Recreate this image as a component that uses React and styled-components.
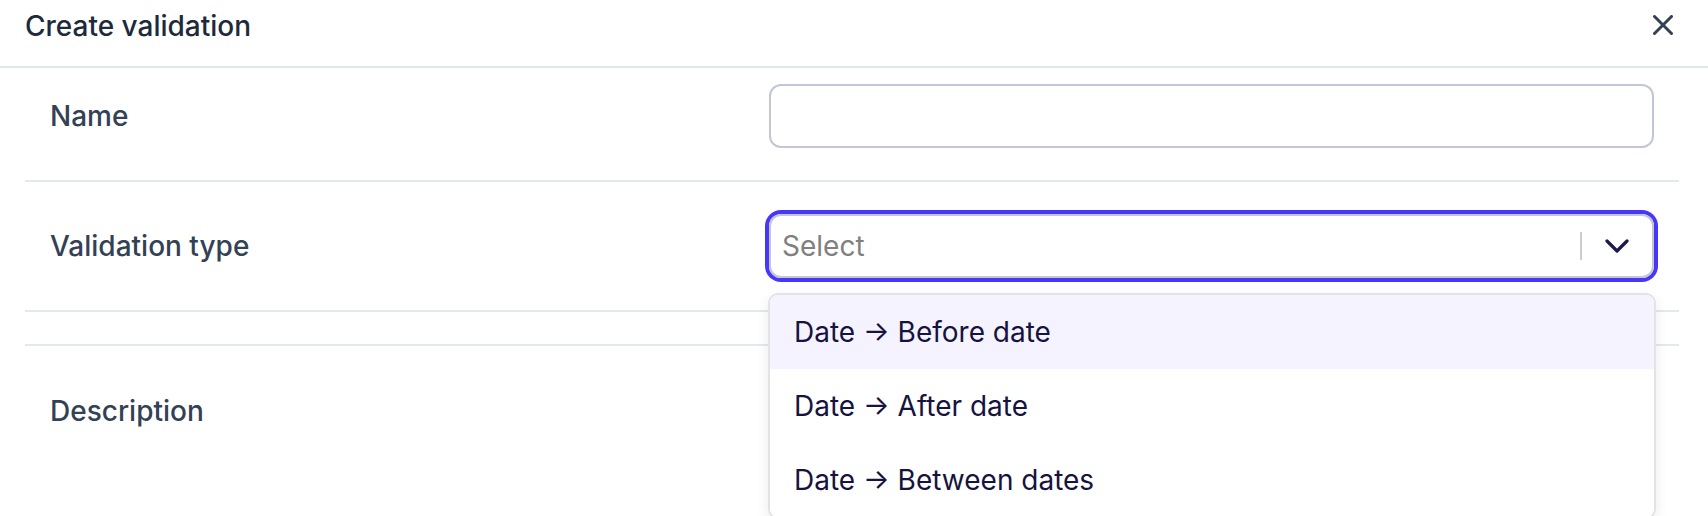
import React from "react";
import styled, { createGlobalStyle } from "styled-components";

const GlobalStyle = createGlobalStyle`
  * { box-sizing: border-box; }
  body {
    margin: 0;
    background: #fff;
    font-family: Inter, "Noto Sans", "Liberation Sans", sans-serif;
  }
`;

const options = ["Date → Before date", "Date → After date", "Date → Between dates"];

const Modal = styled.div`
  width: 1708px;
  height: 516px;
  overflow: hidden;
  background: #fff;
`;

const Header = styled.div`
  height: 68px;
  padding: 9px 35px 0 25px;
  display: flex;
  justify-content: space-between;
  align-items: flex-start;
  border-bottom: 2px solid #e2e8f0;
`;

const Title = styled.h2`
  margin: 0;
  font-size: 28px;
  line-height: 34px;
  font-weight: 500;
  color: #1e293b;
`;

const CloseButton = styled.button`
  margin-top: 6px;
  padding: 0;
  border: 0;
  background: none;
  width: 20px;
  height: 20px;
  display: flex;
  color: #334155;
  cursor: pointer;
`;

const Body = styled.div`
  padding: 0 29px 0 25px;
`;

const Row = styled.div`
  display: grid;
  grid-template-columns: 719px 1fr;
  align-items: center;
  padding: ${(p) => p.$pad || "32px 25px"};
  min-height: ${(p) => p.$minHeight || "auto"};
  border-bottom: 2px solid #e2e8f0;
`;

const Label = styled.label`
  font-size: 28px;
  line-height: 34px;
  font-weight: 500;
  color: #334155;
`;

const TextInput = styled.input`
  height: 64px;
  width: 100%;
  border: 2px solid #c3c7d3;
  border-radius: 12px;
  font: inherit;
  font-size: 28px;
  padding: 0 11px;
  outline: none;
`;

const TextArea = styled.textarea`
  height: 98px;
  width: 100%;
  border: 2px solid #c3c7d3;
  border-radius: 12px;
  font: inherit;
  font-size: 28px;
  padding: 12px 11px;
  resize: none;
  outline: none;
  display: block;
`;

const SelectControl = styled.div`
  position: relative;
  height: 64px;
  display: flex;
  align-items: center;
  border: 2px solid #c3c7d3;
  border-radius: 12px;
  box-shadow: 0 0 0 4px #4836fb;
`;

const Placeholder = styled.div`
  flex: 1;
  padding-left: 11px;
  font-size: 28px;
  line-height: 34px;
  color: #808080;
`;

const Separator = styled.span`
  width: 2px;
  height: 28px;
  background: #cccccc;
`;

const Indicator = styled.div`
  width: 70px;
  display: flex;
  justify-content: center;
  align-items: center;
  color: #1e1a4d;
`;

const Menu = styled.ul`
  position: absolute;
  top: calc(100% + 17px);
  left: -3px;
  right: -4px;
  margin: 0;
  padding: 0;
  list-style: none;
  background: #fff;
  border: 2px solid #e3e3e6;
  border-radius: 10px;
  overflow: hidden;
  box-shadow: 0 4px 14px rgba(0, 0, 0, 0.08);
  z-index: 10;
`;

const Option = styled.li`
  height: 74px;
  padding: 0 24px;
  display: flex;
  align-items: center;
  font-size: 28px;
  color: #17133f;
  background: ${(p) => (p.$active ? "#f5f3ff" : "#fff")};
`;

const CloseIcon = () => (
  <svg width="20" height="20" viewBox="0 0 20 20" fill="none" stroke="currentColor" strokeWidth="3" strokeLinecap="round">
    <line x1="1.5" y1="1.5" x2="18.5" y2="18.5" />
    <line x1="18.5" y1="1.5" x2="1.5" y2="18.5" />
  </svg>
);

const Chevron = () => (
  <svg width="24" height="14" viewBox="0 0 24 14" fill="none" stroke="currentColor" strokeWidth="3.2" strokeLinecap="round" strokeLinejoin="round">
    <polyline points="2,2 12,12 22,2" />
  </svg>
);

export default function App() {
  return (
    <>
      <GlobalStyle />
      <Modal>
        <Header>
          <Title>Create validation</Title>
          <CloseButton aria-label="Close">
            <CloseIcon />
          </CloseButton>
        </Header>
        <Body>
          <Row $pad="16px 25px 32px">
            <Label>Name</Label>
            <TextInput />
          </Row>
          <Row>
            <Label>Validation type</Label>
            <SelectControl>
              <Placeholder>Select</Placeholder>
              <Separator />
              <Indicator>
                <Chevron />
              </Indicator>
              <Menu>
                {options.map((o, i) => (
                  <Option key={o} $active={i === 0}>
                    {o}
                  </Option>
                ))}
              </Menu>
            </SelectControl>
          </Row>
          <Row $pad="0 25px" $minHeight="34px" />
          <Row $pad="16px 25px 64px">
            <Label>Description</Label>
            <TextArea />
          </Row>
        </Body>
      </Modal>
    </>
  );
}
